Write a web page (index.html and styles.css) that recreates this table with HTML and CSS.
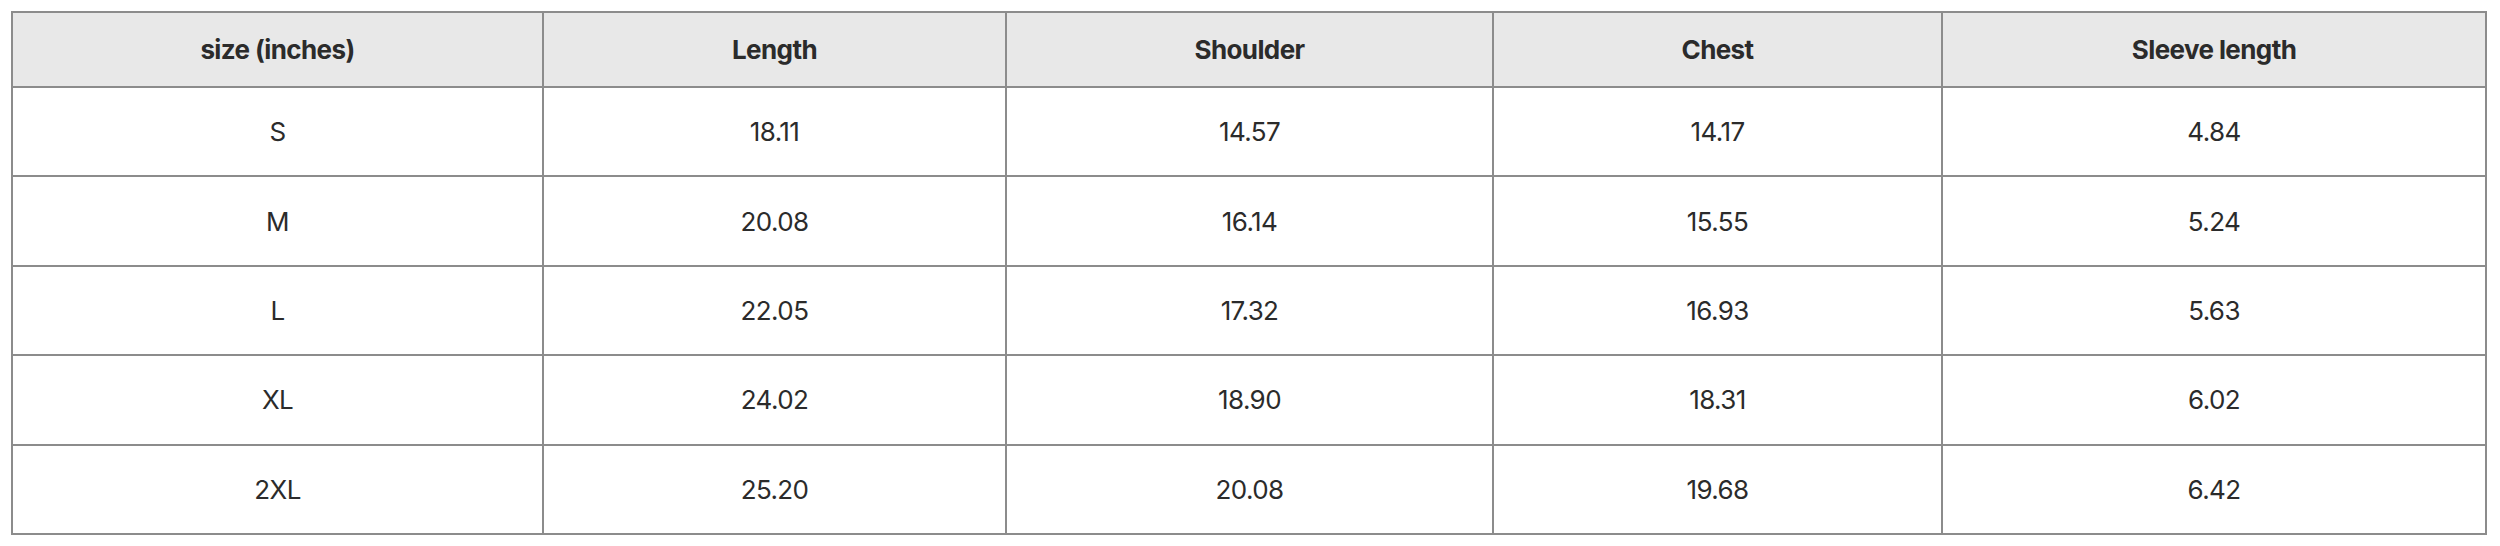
FILE: index.html
```html
<!DOCTYPE html>
<html>
<head>
<meta charset="utf-8">
<link rel="stylesheet" href="styles.css">
</head>
<body>
<table class="size-table">
  <colgroup>
    <col class="c1"><col class="c2"><col class="c3"><col class="c4"><col class="c5">
  </colgroup>
  <thead>
    <tr><th>size (inches)</th><th>Length</th><th>Shoulder</th><th>Chest</th><th>Sleeve length</th></tr>
  </thead>
  <tbody>
    <tr><td>S</td><td>18.11</td><td>14.57</td><td>14.17</td><td>4.84</td></tr>
    <tr><td>M</td><td>20.08</td><td>16.14</td><td>15.55</td><td>5.24</td></tr>
    <tr><td>L</td><td>22.05</td><td>17.32</td><td>16.93</td><td>5.63</td></tr>
    <tr><td>XL</td><td>24.02</td><td>18.90</td><td>18.31</td><td>6.02</td></tr>
    <tr><td>2XL</td><td>25.20</td><td>20.08</td><td>19.68</td><td>6.42</td></tr>
  </tbody>
</table>
</body>
</html>
```
FILE: styles.css
```css
html, body {
  margin: 0;
  padding: 0;
  background: #ffffff;
}
body {
  padding: 11px 15px 0 11px;
  font-family: Inter, "Liberation Sans", Arial, sans-serif;
  color: #2b2b2b;
}
.size-table {
  width: 2474px;
  border-collapse: collapse;
  table-layout: fixed;
  border: 2px solid #8c8c8c;
}
.c1 { width: 531px; }
.c2 { width: 463px; }
.c3 { width: 487px; }
.c4 { width: 449px; }
.c5 { width: 544px; }
.size-table th,
.size-table td {
  border: 2px solid #8c8c8c;
  text-align: center;
  vertical-align: middle;
  padding: 0;
  font-size: 26px;
  letter-spacing: -0.6px;
}
.size-table th {
  background: #e8e8e8;
  font-weight: 700;
  height: 73px;
}
.size-table td {
  font-weight: 400;
  height: 87.4px;
}
```
